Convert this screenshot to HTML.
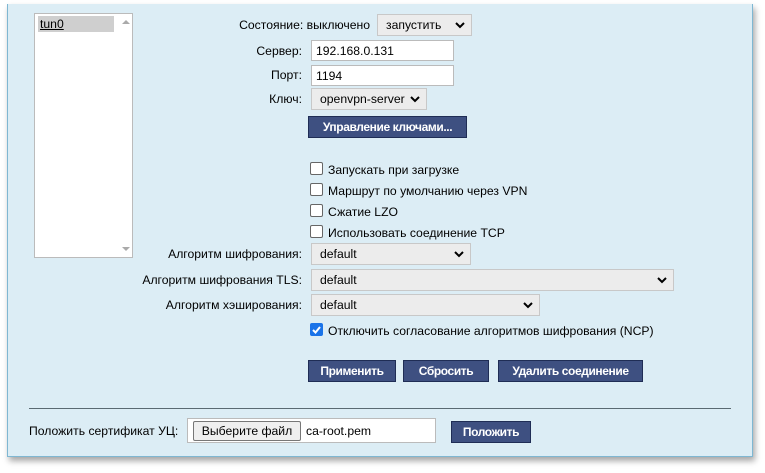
<!DOCTYPE html>
<html><head><meta charset="utf-8"><style>
body{margin:0;width:765px;height:473px;background:#fff;font-family:"Liberation Sans",sans-serif;font-size:12.2px;color:#000;position:relative;overflow:hidden}
.a{position:absolute}
#panel{left:7px;top:4px;width:744px;height:452px;background:#dcedf5;border:1px solid #7fb7d2;border-top:none;box-shadow:2px 4px 6px rgba(0,0,0,.35)}
.lbl{position:absolute;text-align:right;white-space:nowrap;line-height:16px}
.inp{position:absolute;background:#fff;border:1px solid #bbb;line-height:20px;padding-left:4px;box-sizing:border-box;height:21px}
.sel{position:absolute;background:#ececec;border:1px solid #c8c8c8;box-sizing:border-box;height:22px;line-height:20px;padding-left:8px;white-space:nowrap}
.sel svg{position:absolute;right:6px;top:7px}
.btn{position:absolute;background:#3e5081;border:1px solid #1f2d55;color:#fff;font-weight:bold;font-size:12px;letter-spacing:-0.4px;text-align:center;box-sizing:border-box;height:22px;line-height:20px}
.cb{position:absolute;width:13px;height:13px;border:1px solid #666;border-radius:2px;background:#fff;box-sizing:border-box}
.ct{position:absolute;line-height:16px;white-space:nowrap}
</style></head><body>
<div class="a" id="panel"></div>
<div class="a" style="left:34px;top:13px;width:99px;height:245px;background:#fff;border:1px solid #bbb;box-sizing:border-box"></div>
<div class="a" style="left:38px;top:16px;width:76px;height:16px;background:#cfcfcf"></div>
<div class="a" style="left:40px;top:16px;line-height:16px;text-decoration:underline">tun0</div>
<div class="a" style="left:122px;top:20px;width:0;height:0;border-left:4px solid transparent;border-right:4px solid transparent;border-bottom:4px solid #aaa"></div>
<div class="a" style="left:122px;top:247px;width:0;height:0;border-left:4px solid transparent;border-right:4px solid transparent;border-top:4px solid #aaa"></div>

<div class="lbl" style="right:395px;top:17px">Состояние: выключено</div>
<div class="sel" style="left:377px;top:14px;width:95px">запустить<svg width="10" height="7"><path d="M1 1l4 4 4-4" stroke="#000" stroke-width="2" fill="none"/></svg></div>
<div class="lbl" style="right:463px;top:43px">Сервер:</div>
<div class="inp" style="left:311px;top:40px;width:143px">192.168.0.131</div>
<div class="lbl" style="right:463px;top:67px">Порт:</div>
<div class="inp" style="left:311px;top:65px;width:143px">1194</div>
<div class="lbl" style="right:463px;top:91px">Ключ:</div>
<div class="sel" style="left:311px;top:88px;width:116px">openvpn-server<svg width="10" height="7"><path d="M1 1l4 4 4-4" stroke="#000" stroke-width="2" fill="none"/></svg></div>
<div class="btn" style="left:308px;top:116px;width:159px">Управление ключами...</div>

<div class="cb" style="left:310px;top:162px"></div><div class="ct" style="left:328px;top:162px">Запускать при загрузке</div>
<div class="cb" style="left:310px;top:183px"></div><div class="ct" style="left:328px;top:183px">Маршрут по умолчанию через VPN</div>
<div class="cb" style="left:310px;top:204px"></div><div class="ct" style="left:328px;top:204px">Сжатие LZO</div>
<div class="cb" style="left:310px;top:225px"></div><div class="ct" style="left:328px;top:225px">Использовать соединение TCP</div>

<div class="lbl" style="right:463px;top:246px">Алгоритм шифрования:</div>
<div class="sel" style="left:311px;top:243px;width:160px">default<svg width="10" height="7"><path d="M1 1l4 4 4-4" stroke="#000" stroke-width="2" fill="none"/></svg></div>
<div class="lbl" style="right:463px;top:272px">Алгоритм шифрования TLS:</div>
<div class="sel" style="left:311px;top:269px;width:363px">default<svg width="10" height="7"><path d="M1 1l4 4 4-4" stroke="#000" stroke-width="2" fill="none"/></svg></div>
<div class="lbl" style="right:463px;top:297px">Алгоритм хэширования:</div>
<div class="sel" style="left:311px;top:294px;width:229px">default<svg width="10" height="7"><path d="M1 1l4 4 4-4" stroke="#000" stroke-width="2" fill="none"/></svg></div>

<div class="cb" style="left:310px;top:323px;background:#1a73e8;border-color:#1a73e8"><svg width="11" height="11" style="position:absolute;left:0;top:0"><path d="M2 6l2.5 2.5L9 3" stroke="#fff" stroke-width="2" fill="none"/></svg></div>
<div class="ct" style="left:328px;top:323px">Отключить согласование алгоритмов шифрования (NCP)</div>

<div class="btn" style="left:308px;top:360px;width:88px">Применить</div>
<div class="btn" style="left:403px;top:360px;width:86px">Сбросить</div>
<div class="btn" style="left:498px;top:360px;width:145px">Удалить соединение</div>

<div class="a" style="left:29px;top:408px;width:702px;height:1px;background:#5a6a72"></div>
<div class="a" style="left:29px;top:423px;line-height:16px">Положить сертификат УЦ:</div>
<div class="a" style="left:187px;top:418px;width:249px;height:25px;background:#fff;border:1px solid #bbb;box-sizing:border-box"></div>
<div class="a" style="left:193px;top:421px;width:108px;height:20px;background:#efefef;border:1px solid #777;border-radius:2px;box-sizing:border-box;text-align:center;line-height:18px">Выберите файл</div>
<div class="a" style="left:306px;top:423px;line-height:16px">ca-root.pem</div>
<div class="btn" style="left:451px;top:421px;width:80px">Положить</div>
</body></html>
